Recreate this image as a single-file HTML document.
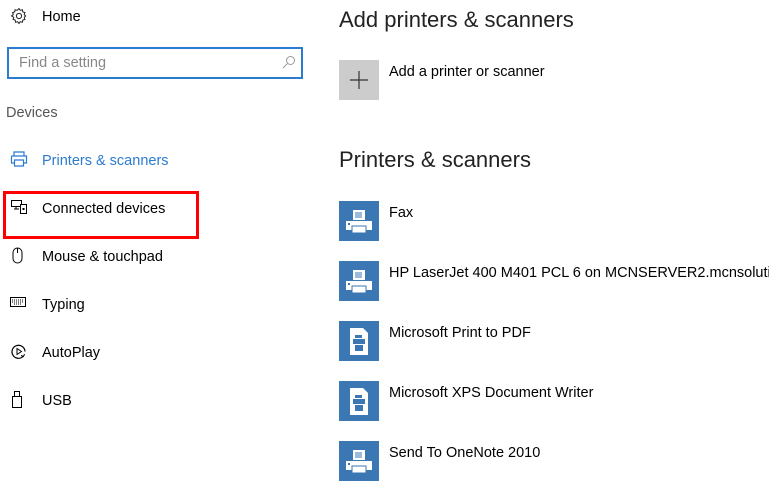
<!DOCTYPE html>
<html><head><style>
body{margin:0;width:769px;height:489px;background:#fff;font-family:"Liberation Sans",sans-serif;position:relative;overflow:hidden;color:#000}
.a{position:absolute;white-space:nowrap}
.n{font-size:14.5px}
.t{position:absolute;left:339px;width:40px;height:40px;background:#3a77b3}
.h{font-size:21px;color:#222}
</style></head><body>
<svg class="a" style="left:10px;top:7px" width="18" height="18" viewBox="0 0 18 18"><circle cx="9" cy="9" r="2.6" fill="none" stroke="#222" stroke-width="1"/><path d="M9 1.5l1.3 1.8 2.1-.6.4 2.2 2.1.7-.7 2.1 1.5 1.3-1.5 1.3.7 2.1-2.1.7-.4 2.2-2.1-.6L9 16.5l-1.3-1.8-2.1.6-.4-2.2-2.1-.7.7-2.1L1.5 9l1.8-1.3-.7-2.1 2.1-.7.4-2.2 2.1.6z" fill="none" stroke="#222" stroke-width="1"/></svg>
<div class="a n" style="left:42px;top:9px">Home</div>
<div class="a" style="left:7px;top:47px;width:292px;height:28px;border:2px solid #2b7bd0"></div>
<div class="a" style="left:19px;top:55px;font-size:14.5px;color:#888">Find a setting</div>
<svg class="a" style="left:282px;top:55px" width="14" height="14"><circle cx="8.5" cy="5.5" r="4" fill="none" stroke="#999"/><path d="M5.5 8.5L1 13" stroke="#999"/></svg>
<div class="a n" style="left:6px;top:105px;color:#555">Devices</div>
<svg class="a" style="left:10px;top:151px" width="18" height="16"><path d="M4 5V1h10v4M1.5 5h15v7h-3M4.5 12h-3V5M4.5 9h9v6h-9z" fill="none" stroke="#2b7bd0" stroke-width="1.2"/></svg>
<div class="a n" style="left:42px;top:153px;color:#2b7bd0">Printers &amp; scanners</div>
<div class="a" style="left:3px;top:191px;width:190px;height:42px;border:3px solid #f00"></div>
<svg class="a" style="left:11px;top:200px" width="17" height="14"><path d="M.5.5h10v6H.5zM3 9h5M5 6.5v2.5" fill="none" stroke="#000"/><path d="M9.5 4.5h6v9h-6z" fill="#fff" stroke="#000"/><rect x="11.5" y="8" width="2" height="2" fill="#000"/></svg>
<div class="a n" style="left:42px;top:201px">Connected devices</div>
<svg class="a" style="left:12px;top:247px" width="12" height="18"><rect x="1" y="1" width="9" height="15" rx="4.5" fill="none" stroke="#000"/><path d="M5.5 1v5" stroke="#000"/></svg>
<div class="a n" style="left:42px;top:249px">Mouse &amp; touchpad</div>
<svg class="a" style="left:10px;top:297px" width="16" height="10"><rect x=".5" y=".5" width="15" height="9" fill="none" stroke="#000"/><path d="M2 3h12M2 5h12M4 7h8" stroke="#000" stroke-dasharray="1 1"/></svg>
<div class="a n" style="left:42px;top:297px">Typing</div>
<svg class="a" style="left:10px;top:343px" width="17" height="17"><path d="M13 13.5A6.5 6.5 0 1 1 15 8.5" fill="none" stroke="#000" stroke-width="1.2"/><path d="M7 5.5v6l4.5-3z" fill="none" stroke="#000"/><path d="M11 12.5l2.5 1 1-2.5" fill="none" stroke="#000"/></svg>
<div class="a n" style="left:42px;top:345px">AutoPlay</div>
<svg class="a" style="left:12px;top:391px" width="10" height="17"><path d="M2.5.5h5v5h-5z M.5 5.5h9v11h-9z" fill="none" stroke="#000"/></svg>
<div class="a n" style="left:42px;top:393px">USB</div>

<div class="a h" style="left:339px;top:7px;font-size:22px">Add printers &amp; scanners</div>
<div class="a" style="left:339px;top:60px;width:40px;height:40px;background:#ccc"></div>
<svg class="a" style="left:349px;top:70px" width="20" height="20"><path d="M10 1v18M1 10h18" stroke="#333" stroke-width="1.2"/></svg>
<div class="a n" style="left:389px;top:64px">Add a printer or scanner</div>
<div class="a h" style="left:339px;top:147px;font-size:22px">Printers &amp; scanners</div>

<div class="t" style="top:201px"></div><div class="a n" style="left:389px;top:205px">Fax</div>
<div class="t" style="top:261px"></div><div class="a n" style="left:389px;top:265px;width:380px;overflow:hidden">HP LaserJet 400 M401 PCL 6 on MCNSERVER2.mcnsoluti...</div>
<div class="t" style="top:321px"></div><div class="a n" style="left:389px;top:325px">Microsoft Print to PDF</div>
<div class="t" style="top:381px"></div><div class="a n" style="left:389px;top:385px">Microsoft XPS Document Writer</div>
<div class="t" style="top:441px"></div><div class="a n" style="left:389px;top:445px">Send To OneNote 2010</div>

<svg width="0" height="0" style="position:absolute"><defs>
<g id="pr"><rect x="14" y="9" width="12" height="10" fill="#fff"/><path d="M16 12h7M16 14h7M16 16h7" stroke="#3a77b3"/><rect x="7" y="20" width="26" height="9" fill="#fff"/><rect x="13" y="25" width="14" height="7" fill="#fff" stroke="#3a77b3"/><rect x="9" y="22" width="2" height="2" fill="#3a77b3"/></g>
<g id="doc"><path d="M11 7h13l5 5v22H11z" fill="#fff"/><rect x="14" y="18" width="12" height="5" fill="#3a77b3"/><rect x="16" y="14" width="7" height="3" fill="#3a77b3"/><rect x="16" y="24" width="8" height="6" fill="#3a77b3"/></g></defs></svg>
<svg class="a" style="left:339px;top:201px" width="40" height="40"><use href="#pr"/></svg>
<svg class="a" style="left:339px;top:261px" width="40" height="40"><use href="#pr"/></svg>
<svg class="a" style="left:339px;top:321px" width="40" height="40"><use href="#doc"/></svg>
<svg class="a" style="left:339px;top:381px" width="40" height="40"><use href="#doc"/></svg>
<svg class="a" style="left:339px;top:441px" width="40" height="40"><use href="#pr"/></svg>
</body></html>
